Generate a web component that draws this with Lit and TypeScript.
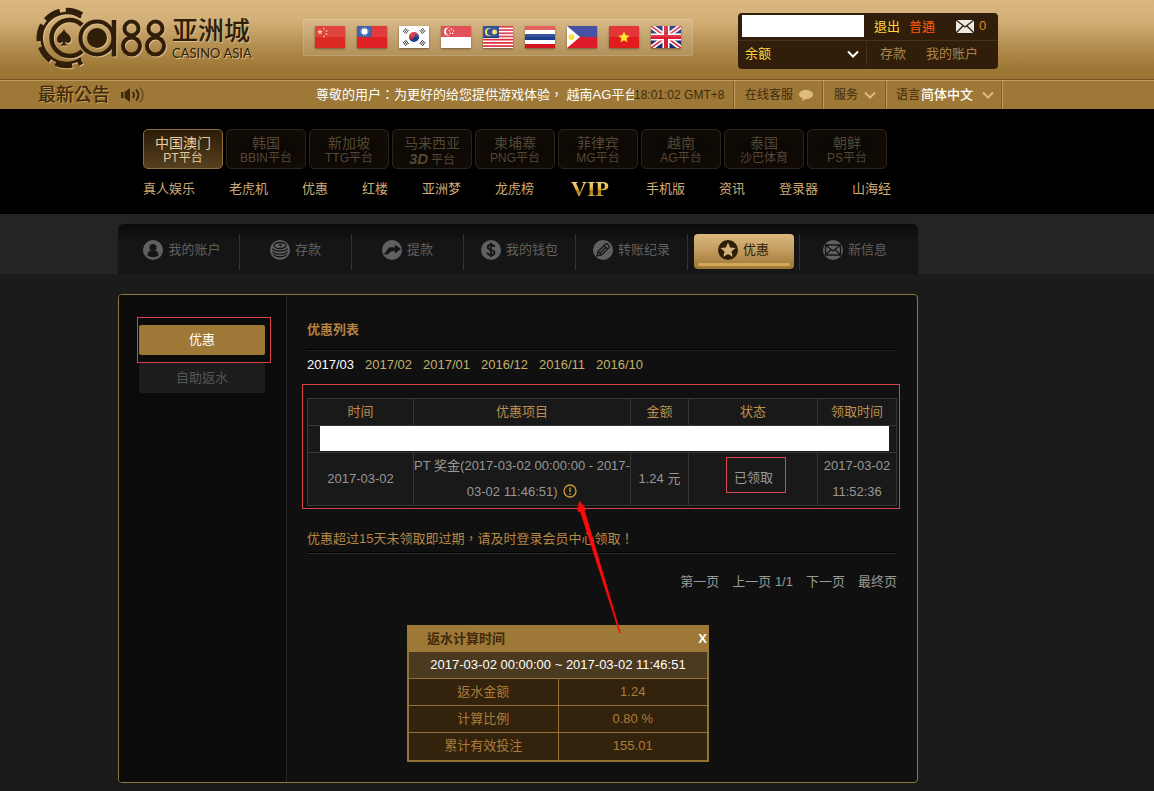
import { LitElement, html, css, svg } from 'lit';
import { customElement, state } from 'lit/decorators.js';
import { classMap } from 'lit/directives/class-map.js';

const star = (cx: number, cy: number, r: number) =>
  Array.from({ length: 10 }, (_, i) => {
    const a = (Math.PI / 5) * i - Math.PI / 2;
    const d = i % 2 ? r * 0.45 : r;
    return `${(cx + d * Math.cos(a)).toFixed(2)},${(cy + d * Math.sin(a)).toFixed(2)}`;
  }).join(' ');

const rect = (x: number, y: number, w: number, h: number, fill: string) =>
  svg`<rect x=${x} y=${y} width=${w} height=${h} fill=${fill}></rect>`;

const FLAGS = [
  {
    name: '中国',
    art: svg`${rect(0, 0, 30, 22, '#dc2a24')}<polygon points=${star(5, 6, 3)} fill="#f7c98a"></polygon>
      <circle cx="9" cy="2.5" r="0.9" fill="#f3b07c"></circle><circle cx="11.5" cy="5" r="0.9" fill="#f3b07c"></circle>
      <circle cx="11.5" cy="8" r="0.9" fill="#f3b07c"></circle><circle cx="9" cy="10.5" r="0.9" fill="#f3b07c"></circle>`,
  },
  {
    name: '台湾',
    art: svg`${rect(0, 0, 30, 22, '#de2024')}${rect(0, 0, 15, 11, '#2c4fa3')}<circle cx="7.5" cy="5.5" r="3" fill="#fff"></circle>
      <circle cx="7.5" cy="5.5" r="3.6" fill="none" stroke="#c9d8f4" stroke-dasharray="1 1"></circle>`,
  },
  {
    name: '한국',
    art: svg`${rect(0, 0, 30, 22, '#fff')}<path d="M10 11a5 5 0 0 1 10 0z" fill="#d8242e"></path><path d="M10 11a5 5 0 0 0 10 0z" fill="#183d8c"></path>
      <circle cx="12.5" cy="11" r="2.5" fill="#d8242e"></circle><circle cx="17.5" cy="11" r="2.5" fill="#183d8c"></circle>
      <g stroke="#333" stroke-width="1"><path d="M4 6l3-4M5.300 7l3-4M6.600 8l3-4M22 3l3 4M23.300 2l3 4M20.700 4l3 4M4 16l3 4M5.300 15l3 4M6.600 14l3 4M22 19l3-4M23.300 20l3-4M20.700 18l3-4"></path></g>`,
  },
  {
    name: 'Singapore',
    art: svg`${rect(0, 0, 30, 11, '#dd3a40')}${rect(0, 11, 30, 11, '#fff')}<circle cx="7" cy="5.5" r="4" fill="#fff"></circle><circle cx="8.800" cy="5.500" r="3.800" fill="#dd3a40"></circle>
      <g fill="#fff"><circle cx="10.500" cy="3" r=".8"></circle><circle cx="8.500" cy="4.800" r=".8"></circle><circle cx="12.500" cy="4.800" r=".8"></circle><circle cx="9.300" cy="7.300" r=".8"></circle><circle cx="11.700" cy="7.300" r=".8"></circle></g>`,
  },
  {
    name: 'Malaysia',
    art: svg`${rect(0, 0, 30, 22, '#fff')}${[0, 1, 2, 3, 4, 5, 6].map((i) => rect(0, i * 3.2, 30, 1.7, '#dc2c38'))}${rect(0, 0, 16, 12, '#1d3a85')}
      <circle cx="6" cy="6" r="4" fill="#f2dc66"></circle><circle cx="7.500" cy="6" r="3.500" fill="#1d3a85"></circle><circle cx="11.500" cy="6" r="2.500" fill="#f2dc66"></circle>`,
  },
  {
    name: 'ไทย',
    art: svg`${rect(0, 0, 30, 22, '#fff')}${rect(0, 0, 30, 4, '#e04a48')}${rect(0, 18, 30, 4, '#d4141e')}${rect(0, 8, 30, 6, '#1d3b8b')}`,
  },
  {
    name: 'Pilipinas',
    art: svg`${rect(0, 0, 30, 11, '#2c3a94')}${rect(0, 11, 30, 11, '#dc1a2a')}<path d="M0 0L13 11L0 22z" fill="#fff"></path><circle cx="4.500" cy="11" r="3" fill="#f4de3c"></circle>`,
  },
  { name: 'Việt Nam', art: svg`${rect(0, 0, 30, 22, '#e01c1c')}<polygon points=${star(15, 11.5, 6)} fill="#ffe81e"></polygon>` },
  {
    name: 'English',
    art: svg`${rect(0, 0, 30, 22, '#20286c')}<path d="M0 0L30 22M30 0L0 22" stroke="#fff" stroke-width="5"></path><path d="M0 0L30 22M30 0L0 22" stroke="#dc2436" stroke-width="1.600"></path>
      <path d="M15 0V22M0 11H30" stroke="#fff" stroke-width="7"></path><path d="M15 0V22M0 11H30" stroke="#dc1c30" stroke-width="4"></path>`,
  },
];

const PLATFORMS = [
  ['中国澳门', 'PT平台'],
  ['韩国', 'BBIN平台'],
  ['新加坡', 'TTG平台'],
  ['马来西亚', '3D平台'],
  ['柬埔寨', 'PNG平台'],
  ['菲律宾', 'MG平台'],
  ['越南', 'AG平台'],
  ['泰国', '沙巴体育'],
  ['朝鲜', 'PS平台'],
];

const MENU = ['真人娱乐', '老虎机', '优惠', '红楼', '亚洲梦', '龙虎榜', 'VIP', '手机版', '资讯', '登录器', '山海经'];

const ACCOUNT = [
  { label: '我的账户', icon: svg`<circle cx="10" cy="7.500" r="3.500" fill="var(--hole)"></circle><path d="M4.500 15.500c0-3 1.500-4.500 3.500-5h4c2 .5 3.500 2 3.500 5-3 2.300-8 2.300-11 0z" fill="var(--hole)"></path>` },
  {
    label: '存款',
    icon: svg`<g fill="none" stroke="var(--hole)" stroke-width="1.300"><ellipse cx="10" cy="5.500" rx="6" ry="3"></ellipse><path d="M2.500 8.500c1.500 3.500 13.500 3.500 15 0M2.500 11.500c1.500 3.500 13.500 3.500 15 0M3.500 14.500c2 3 11 3 13 0M9 5h2v1.500"></path></g>`,
  },
  { label: '提款', icon: svg`<path d="M2 14.500L6.500 8c.5-.6 1-.8 1.800-.8H13V4.500l6 4.500-6 4.500v-2.300H9.500L5.500 14.500z" fill="var(--hole)"></path>` },
  {
    label: '我的钱包',
    icon: svg`<path d="M13.500 7c-.5-1.500-1.700-2.200-3.500-2.200S6.700 5.800 6.700 7.300c0 3.500 6.800 1.700 6.800 5.300 0 1.700-1.400 2.600-3.500 2.600s-3.400-.9-3.700-2.700M10 2.800v14.400" fill="none" stroke="var(--hole)" stroke-width="1.900"></path>`,
  },
  {
    label: '转账纪录',
    icon: svg`<path d="M4 16l1-4.500L12.500 4c1-1 4.500 2 3.500 3.500L8.500 15zM5 11.500L8.500 15M11 5.500L14.500 9M7 13l6-6" fill="none" stroke="var(--hole)" stroke-width="1.300"></path>`,
  },
  { label: '优惠', icon: svg`<polygon points=${star(10, 10.4, 8)} fill="var(--hole)"></polygon>` },
  { label: '新信息', icon: svg`<path d="M2.500 5h15v10h-15zM2.500 5l7.500 6 7.500-6M2.500 15l5.500-5.500M17.500 15l-5.500-5.500" fill="none" stroke="var(--hole)" stroke-width="1.300"></path>` },
];

const MONTHS = ['2017/03', '2017/02', '2017/01', '2016/12', '2016/11', '2016/10'];

const chevron = html`<svg class="chevron" viewBox="0 0 12 8" aria-hidden="true"><path d="M1 1.500L6 6.500l5-5" fill="none" stroke="currentColor" stroke-width="2"></path></svg>`;

const base = css`
  :host { display: block; }
  * { box-sizing: border-box; }
  a { color: inherit; text-decoration: none; }
  button, select, input { font: inherit; color: inherit; background: none; border: 0; margin: 0; padding: 0; border-radius: 0; }
  button, select { cursor: pointer; }
  select { appearance: none; outline: none; }
  option { color: #222; }
  svg { display: block; flex: none; }
`;

@customElement('casino-logo')
class CasinoLogo extends LitElement {
  static styles = [base, css`
    .logo { display: flex; align-items: center; gap: 6px; color: #301e09; }
    .mark { width: 133px; height: 62px; filter: drop-shadow(1px 1px 0 #dcbf8f); }
    .name { display: flex; flex-direction: column; text-shadow: 1px 1px 0 #dcbf8f; padding-top: 2px; }
    .zh { font-size: 26px; line-height: 28px; font-weight: 500; }
    .en { font: 13px/16px Lato, sans-serif; white-space: nowrap; }
  `];
  render() {
    return html`<a class="logo" href="#" aria-label="CA88 亚洲城">
      <svg class="mark" viewBox="33 7 133 62" fill="none" stroke="#301e09">
        <path d="M81 17.500A25 25 0 1 0 81 58.500" stroke-width="2.500"></path>
        <path d="M82 14.500A28 28 0 1 0 82 61.500" stroke-width="4.500" stroke-dasharray="17 6"></path>
        <path d="M82 25A18 18 0 1 0 82 51" stroke-width="4.500"></path>
        <path d="M64 29c1.500 4 7 6 7 10.500 0 3.500-4 4.500-6 2 .2 2 1 3 3 4h-8c2-1 2.800-2 3-4-2 2.500-6 1.500-6-2C57 35 62.500 33 64 29z" fill="#301e09" stroke="none"></path>
        <circle cx="97" cy="38" r="16.500" stroke-width="4"></circle>
        <circle cx="97" cy="38" r="10" fill="#301e09" stroke="none"></circle>
        <path d="M114 20V56.500" stroke-width="4.500"></path>
        <g stroke-width="4"><circle cx="131.500" cy="28.500" r="7"></circle><circle cx="131.500" cy="46" r="8.500"></circle>
        <circle cx="155.500" cy="28.500" r="7"></circle><circle cx="155.500" cy="46" r="8.500"></circle></g>
      </svg>
      <span class="name"><span class="zh">亚洲城</span><span class="en">CASINO ASIA</span></span>
    </a>`;
  }
}

@customElement('site-header')
class SiteHeader extends LitElement {
  static styles = [base, css`
    .top { height: 80px; display: flex; align-items: flex-start; padding-left: 33px; background: linear-gradient(#dab782, #d3b078 25%, #b28d4f 60%, #9d7836 85%, #9b7534); border-bottom: 1px solid #785520; }
    .brand { padding-top: 7px; width: 270px; }
    .flags { display: flex; gap: 12px; margin-top: 19px; padding: 6px 11px 7px; width: 390px; border: 1px solid #ffffff22; border-radius: 2px; background: #ffffff1c; }
    .flag { display: block; width: 30px; height: 22px; box-shadow: 0 1px 2px #0006; background: #fff; }
    .flag svg { width: 30px; height: 22px; }
    .user { margin: 13px 0 0 45px; width: 260px; height: 56px; background: #301e0a; border-radius: 4px; color: #a98350; }
    .row { display: flex; align-items: center; height: 27px; }
    .row + .row { border-top: 1px solid #493318; }
    .name { width: 122px; height: 22px; background: #fff; margin: 0 10px 2px 4px; color: #222; }
    .out { color: #ffd83c; margin-right: 9px; }
    .level { color: #ff5a10; margin-right: 21px; }
    .mail { display: flex; gap: 5px; color: #d68a25; line-height: 20px; padding-bottom: 2px; }
    .mail svg { width: 18px; height: 20px; }
    .pick { position: relative; display: flex; align-items: center; }
    .chevron { width: 12px; height: 8px; }
    .pick .chevron { position: absolute; right: 0; pointer-events: none; }
    .balance { width: 129px; border-right: 1px solid #493318; padding: 0 7px; height: 24px; color: #fff; }
    .balance select { width: 100%; color: #ffd83c; }
    .balance .chevron { right: 7px; }
    .links { display: flex; gap: 20px; padding-left: 13px; }
    .news { display: flex; align-items: stretch; height: 29px; padding-left: 38px; background: #9d7836; border-top: 1px solid #c19b5b; color: #412a0c; font-size: 12px; line-height: 28px; }
    .title { margin: 0; font-size: 18px; line-height: 28px; font-weight: 500; text-shadow: 1px 1px 0 #c49c58; }
    .horn { width: 24px; height: 22px; margin: 3px 171px 0 11px; }
    .ticker { width: 318px; overflow: hidden; white-space: nowrap; color: #fff; font-size: 13px; line-height: 28px; }
    .clock { width: 100px; }
    .cell { display: flex; align-items: center; gap: 6px; border-left: 1px solid #c19b5b; box-shadow: -1px 0 0 #7e5c26; padding: 0 10px; white-space: nowrap; }
    .cell .chevron { color: #dfbb7b; }
    .bubble { width: 14px; height: 12px; }
    .end { border-left: 1px solid #c19b5b; box-shadow: -1px 0 0 #7e5c26; }
    .lang { gap: 1px; padding: 0 8px 0 9px; }
    .lang select { color: #fff; font-size: 13px; font-weight: 500; padding-right: 20px; }
  `];
  render() {
    return html`
      <div class="top">
        <casino-logo class="brand"></casino-logo>
        <nav class="flags">${FLAGS.map((f) => html`<a class="flag" href="#" aria-label=${f.name}><svg viewBox="0 0 30 22">
          ${f.art}<rect width="30" height="11" fill="#fff" opacity=".12"></rect></svg></a>`)}</nav>
        <div class="user">
          <div class="row">
            <input class="name" type="text" aria-label="账号" />
            <a class="out" href="#">退出</a><span class="level">普通</span>
            <a class="mail" href="#"><svg viewBox="0 0 18 20"><rect y="4" width="18" height="13" fill="#ece9e4"></rect><path d="M0 4l9 7 9-7M0 17l7-7M18 17l-7-7" fill="none" stroke="#301e0a" stroke-width="1.300"></path></svg>0</a>
          </div>
          <div class="row">
            <div class="pick balance"><select aria-label="余额"><option>余额</option></select>${chevron}</div>
            <div class="links"><a href="#">存款</a><a href="#">我的账户</a></div>
          </div>
        </div>
      </div>
      <div class="news">
        <h2 class="title">最新公告</h2>
        <svg class="horn" viewBox="0 0 24 22" fill="none" stroke="#412a0c"><path d="M0 8h2.500v6H0zM3.500 8l5.500-4v14l-5.500-4z" fill="#412a0c" stroke="none"></path><path d="M12 8c1.300 2 1.300 4 0 6M15 5.500c3 3.500 3 7.500 0 11" stroke-width="2"></path><path d="M19 3.500c4 4.500 4 10.500 0 15" stroke-width="1.600" opacity=".5"></path></svg>
        <div class="ticker">尊敬的用户：为更好的给您提供游戏体验， 越南AG平台</div>
        <div class="clock">18:01:02 GMT+8</div>
        <a class="cell" href="#">在线客服<svg class="bubble" viewBox="0 0 14 12"><path d="M7 1c4 0 7 1.800 7 4.500S11 10 7 10l-4 2 .8-2.700C1.500 8.600 0 7.300 0 5.500 0 2.800 3 1 7 1z" fill="#dfbb7b"></path></svg></a>
        <button class="cell" type="button">服务 ${chevron}</button>
        <div class="cell lang"><label for="lang">语言</label><span class="pick"><select id="lang"><option>简体中文</option></select>${chevron}</span></div>
        <span class="end"></span>
      </div>`;
  }
}

@customElement('site-nav')
class SiteNav extends LitElement {
  static styles = [base, css`
    :host { background: #000; }
    .wrap { height: 105px; padding: 20px 0 0 143px; }
    .platforms { display: flex; gap: 3px; }
    .platform { display: flex; flex-direction: column; align-items: center; width: 80px; height: 40px; padding-top: 6px; border: 1px solid #2b241b; border-radius: 5px; background: radial-gradient(#090603, #120c05); color: #554735; line-height: 15px; font-size: 12px; }
    .platform.on { border-color: #8c6d40; background: linear-gradient(#2c1b07, #56401f); color: #e6cd9f; }
    .country { font-size: 14px; }
    .three { font-size: 15px; font-weight: 700; font-style: italic; margin-right: 3px; }
    .menu { display: flex; align-items: center; gap: 34px; height: 24px; margin-top: 8px; color: #cdaa77; line-height: 24px; white-space: nowrap; }
    .vip { padding: 0 3px; font: 700 22px/24px "Liberation Serif", serif; background: linear-gradient(#fff3b0, #e0b23c 50%, #a87415 60%, #f4dc80); background-clip: text; color: transparent; }
  `];
  render() {
    return html`<div class="wrap">
      <nav class="platforms">${PLATFORMS.map(([a, b], i) => html`<a href="#" class=${classMap({ platform: true, on: i === 0 })}>
        <span class="country">${a}</span><span>${b.startsWith('3D') ? html`<span class="three">3D</span>平台` : b}</span></a>`)}</nav>
      <nav class="menu">${MENU.map((m) => html`<a href="#" class=${classMap({ vip: m === 'VIP' })}>${m}</a>`)}</nav>
    </div>`;
  }
}

@customElement('account-nav')
class AccountNav extends LitElement {
  @state() active = '优惠';
  static styles = [base, css`
    :host { background: #242424; padding: 10px 0 0 118px; }
    .bar { display: grid; grid-template-columns: 121px repeat(5, 112px) 1fr; width: 800px; max-width: 100%; height: 50px; padding: 10px 0 4px; background: linear-gradient(#0a0a0a, #151515 35%); border-radius: 6px 6px 0 0; box-shadow: 0 0 1px #000; }
    .slot { display: flex; justify-content: center; border-left: 1px solid #323232; }
    .slot:first-child { border-color: transparent; padding-left: 6px; }
    .slot:last-child { padding-right: 8px; }
    .tab { --hole: #151515; display: flex; align-items: center; justify-content: center; gap: 5px; width: 100px; height: 35px; padding-bottom: 4px; color: #606060; white-space: nowrap; }
    .tab svg { width: 20px; height: 20px; }
    .tab.on { --hole: #d5b27a; color: #301e0a; border-radius: 4px; background: linear-gradient(#dcb981, #c19a5c 50%, #9b7534); }
    .tab.on { position: relative; }
    .tab.on::after { content: ""; position: absolute; left: 4px; right: 4px; bottom: 3px; height: 3px; border-radius: 2px; background: #d5a75b; }
  `];
  render() {
    return html`<nav class="bar">${ACCOUNT.map((t) => html`<div class="slot">
      <button type="button" class=${classMap({ tab: true, on: t.label === this.active })} @click=${() => (this.active = t.label)}>
        <svg viewBox="0 0 20 20" aria-hidden="true"><circle cx="10" cy="10" r="10" fill="currentColor"></circle>${t.icon}</svg>${t.label}</button></div>`)}</nav>`;
  }
}

@customElement('rebate-card')
class RebateCard extends LitElement {
  static styles = [base, css`
    .card { width: 302px; border: 2px solid #937335; border-top: 0; background: #33220c; color: #ab7c3a; }
    .head { display: flex; justify-content: space-between; align-items: center; height: 27px; margin: 0 -2px; padding: 0 0 0 20px; background: #9d7836; color: #412a0c; font-weight: 700; }
    .title { margin: 0; font-size: 13px; line-height: 27px; }
    .close { color: #fff; font-weight: 700; padding: 0 2px; }
    table { width: 100%; border-collapse: collapse; table-layout: fixed; text-align: center; }
    .range { height: 26px; line-height: 26px; background: #4c3a20; color: #fff; text-align: center; }
    th, td { height: 27px; padding: 0; font-weight: 400; border-top: 1px solid #937335; }
    td { border-left: 1px solid #937335; }
  `];
  render() {
    return html`<section class="card">
      <div class="head"><h3 class="title">返水计算时间</h3><button class="close" type="button" aria-label="关闭">X</button></div>
      <div class="range">2017-03-02 00:00:00 ~ 2017-03-02 11:46:51</div>
      <table><tbody>
        <tr><th scope="row">返水金额</th><td>1.24</td></tr>
        <tr><th scope="row">计算比例</th><td>0.80 %</td></tr>
        <tr><th scope="row">累计有效投注</th><td>155.01</td></tr>
      </tbody></table>
    </section>`;
  }
}

@customElement('promo-panel')
class PromoPanel extends LitElement {
  @state() month = MONTHS[0];
  static styles = [base, css`
    :host { padding: 20px 0 9px 118px; }
    .panel { position: relative; display: flex; width: 800px; max-width: 100%; border: 1px solid #8f7540; border-radius: 4px; background: #101010; }
    .side { width: 168px; padding: 22px 15px 0 18px; background: #0b0b0b; border-right: 1px solid #242424; border-radius: 3px 0 0 3px; }
    .marked { border: 1px solid #d9434a; }
    .side .marked { padding: 7px 5px 7px 1px; }
    .choice { display: block; width: 100%; height: 30px; border-radius: 2px; background: #1d1d1d; color: #555; }
    .choice.on { background: #9d7836; color: #fff; }
    .other { padding: 0 6px 0 2px; }
    .main { flex: 1; min-width: 0; padding: 23px 20px 20px; }
    .heading { margin: 0; height: 33px; font-size: 13px; line-height: 24px; color: #b48241; border-bottom: 1px solid #232323; box-shadow: inset 0 -1px 0 #000; }
    .months { display: flex; gap: 11px; margin-top: 1px; height: 32px; color: #c2b06a; }
    .months button { height: 26px; }
    .months .on { color: #fff; }
    .records { margin: 0 -3px 0 -5px; padding: 13px 2px 2px 4px; }
    table { width: 100%; border-collapse: collapse; table-layout: fixed; background: #191919; text-align: center; color: #979797; line-height: 26px; }
    th, td { padding: 0; border: 1px solid #373737; font-weight: 400; }
    th { color: #bd8f4c; }
    .c1 { width: 106px; } .c2 { width: 217px; } .c3 { width: 58px; } .c4 { width: 129px; }
    .blank { padding: 0 7px 1px 12px; }
    .cover { height: 25px; background: #fff; }
    .status { display: inline-block; vertical-align: middle; height: 36px; line-height: 40px; padding: 0 12px 0 7px; margin: 0 0 8px 6px; }
    .info { display: inline-block; width: 14px; height: 14px; vertical-align: -2px; margin-left: 2px; color: #cf9b36; }
    .info svg { width: 14px; height: 14px; }
    .note { margin: 18px 0 0; height: 27px; line-height: 24px; color: #b58845; border-bottom: 1px solid #292929; box-shadow: inset 0 -1px 0 #000; }
    .pager { display: flex; justify-content: flex-end; gap: 13px; margin-top: 16px; color: #999; line-height: 24px; }
    rebate-card { margin: 31px 0 0 100px; }
    .arrow { position: absolute; left: 457px; top: 203px; width: 48px; height: 138px; pointer-events: none; }
  `];
  render() {
    return html`<div class="panel">
      <aside class="side">
        <div class="marked"><button type="button" class="choice on">优惠</button></div>
        <div class="other"><button type="button" class="choice">自助返水</button></div>
      </aside>
      <main class="main">
        <h1 class="heading">优惠列表</h1>
        <div class="months">${MONTHS.map((m) => html`<button type="button" class=${classMap({ on: m === this.month })} @click=${() => (this.month = m)}>${m}</button>`)}</div>
        <div class="records marked"><table>
          <colgroup><col class="c1" /><col class="c2" /><col class="c3" /><col class="c4" /><col /></colgroup>
          <thead><tr>${['时间', '优惠项目', '金额', '状态', '领取时间'].map((h) => html`<th scope="col">${h}</th>`)}</tr></thead>
          <tbody>
            <tr><td class="blank" colspan="5"><div class="cover"></div></td></tr>
            <tr><td>2017-03-02</td>
              <td>PT 奖金(2017-03-02 00:00:00 - 2017-03-02 11:46:51) <button type="button" class="info" aria-label="返水明细"><svg viewBox="0 0 14 14"><circle cx="7" cy="7" r="6" fill="none" stroke="currentColor" stroke-width="1.300"></circle><path d="M7 3.500v4.500M7 9.300v1.500" stroke="currentColor" stroke-width="1.400"></path></svg></button></td>
              <td>1.24 元</td><td><span class="status marked">已领取</span></td><td>2017-03-02 11:52:36</td></tr>
          </tbody></table></div>
        <p class="note">优惠超过15天未领取即过期，请及时登录会员中心领取！</p>
        <nav class="pager"><a href="#">第一页</a><span><a href="#">上一页</a> 1/1</span><a href="#">下一页</a><a href="#">最终页</a></nav>
        <rebate-card></rebate-card>
      </main>
      <svg class="arrow" viewBox="576 498 48 138" aria-hidden="true"><path d="M579.500 501l6.500 8.500-1.500 1L620.500 633h-1L580.500 512l-3-1z" fill="#ff0a0a" stroke="#ff0a0a" stroke-width=".5"></path></svg>
    </div>`;
  }
}

@customElement('app-root')
class AppRoot extends LitElement {
  static styles = css`
    :host { display: block; min-height: 100vh; background: #1b1b1b; color: #999; font: 13px/20px "Liberation Sans", Arial, "Noto Sans CJK TC", "Noto Sans CJK SC", sans-serif; }
  `;
  render() {
    return html`<site-header></site-header><site-nav></site-nav><account-nav></account-nav><promo-panel></promo-panel>`;
  }
}
